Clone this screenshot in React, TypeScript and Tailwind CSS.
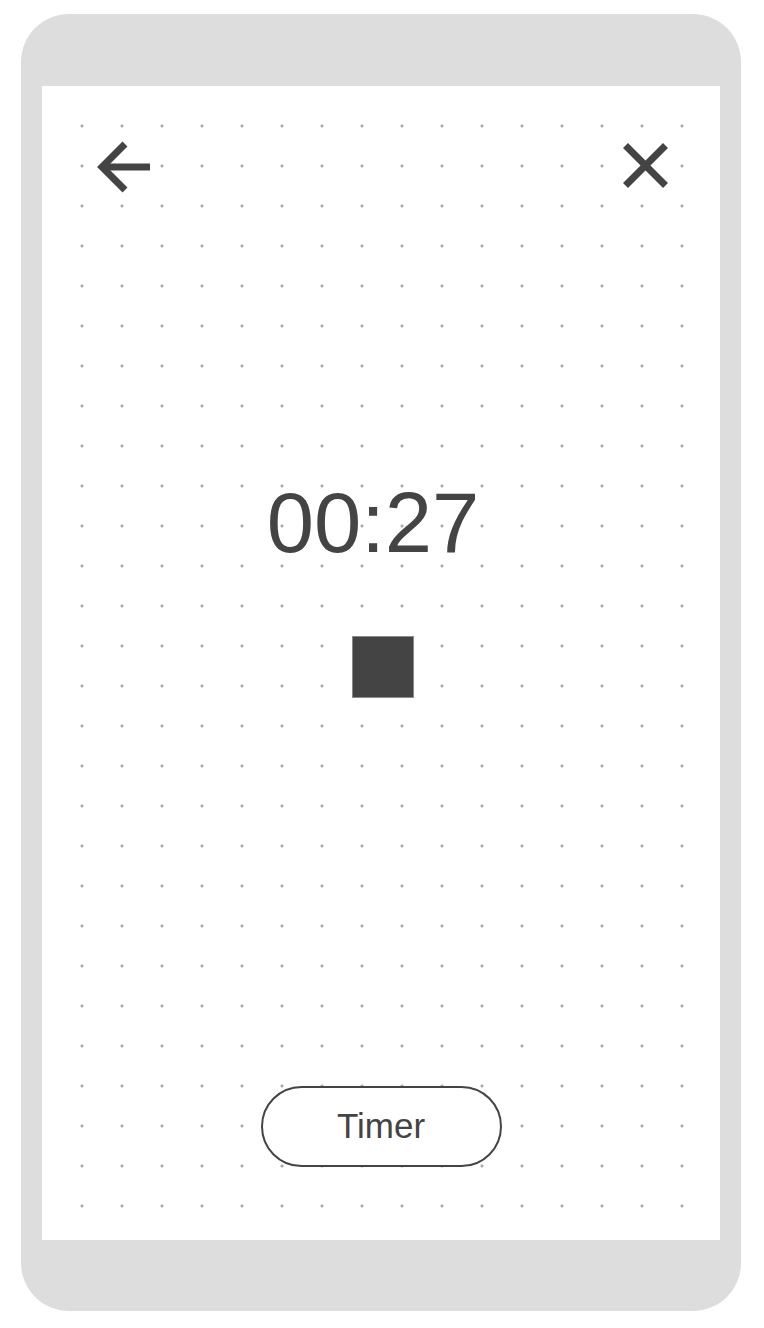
export default function App() {
    return (
        <div className="w-[764px] h-[1328px] bg-white pt-[14px] pl-[21px]" style={{ fontFamily: '"Liberation Sans", Arial, sans-serif' }}>
            {/* phone frame */}
            <div className="w-[720px] h-[1297px] rounded-[48px] bg-[#dddddd] pt-[72px] pb-[71px] px-[21px] flex flex-col">
                {/* screen */}
                <div className="flex-1 bg-white pt-[38px] pl-[38px] pr-[36px] pb-[32px] flex flex-col">
                    <div className="flex-1 flex flex-col items-center bg-[radial-gradient(circle_at_2px_2px,#acacac_1.3px,transparent_1.8px)] bg-[size:40px_40px]">
                        {/* header */}
                        <div className="self-stretch flex justify-between items-start mt-[15px] h-[56px]">
                            <svg width="56" height="56" viewBox="0 0 56 56" className="ml-[15px]" fill="none" stroke="#444444" strokeWidth="7">
                                <path d="M7 28 H55" />
                                <path d="M30 5 L7 28 L30 51" strokeLinejoin="miter" />
                            </svg>
                            <svg width="48" height="48" viewBox="0 0 48 48" className="mr-[15px] mt-[2px]" fill="none" stroke="#444444" strokeWidth="7">
                                <path d="M4.5 4.5 L44.5 44.5 M44.5 4.5 L4.5 44.5" />
                            </svg>
                        </div>

                        {/* time */}
                        <div className="mt-[285px] mr-[18px] text-[85px] leading-none text-[#444444]">00:27</div>

                        {/* stop */}
                        <div className="mt-[71px] ml-[2px] w-[62px] h-[62px] bg-[#444444] border border-[#8a8a8a]" />

                        {/* button */}
                        <button className="mt-auto mb-[41px] mr-[2px] w-[241px] h-[81px] rounded-full border-2 border-[#444444] bg-white text-[35px] text-[#444444] flex items-center justify-center">
                            Timer
                        </button>
                    </div>
                </div>
            </div>
        </div>
    );
}
